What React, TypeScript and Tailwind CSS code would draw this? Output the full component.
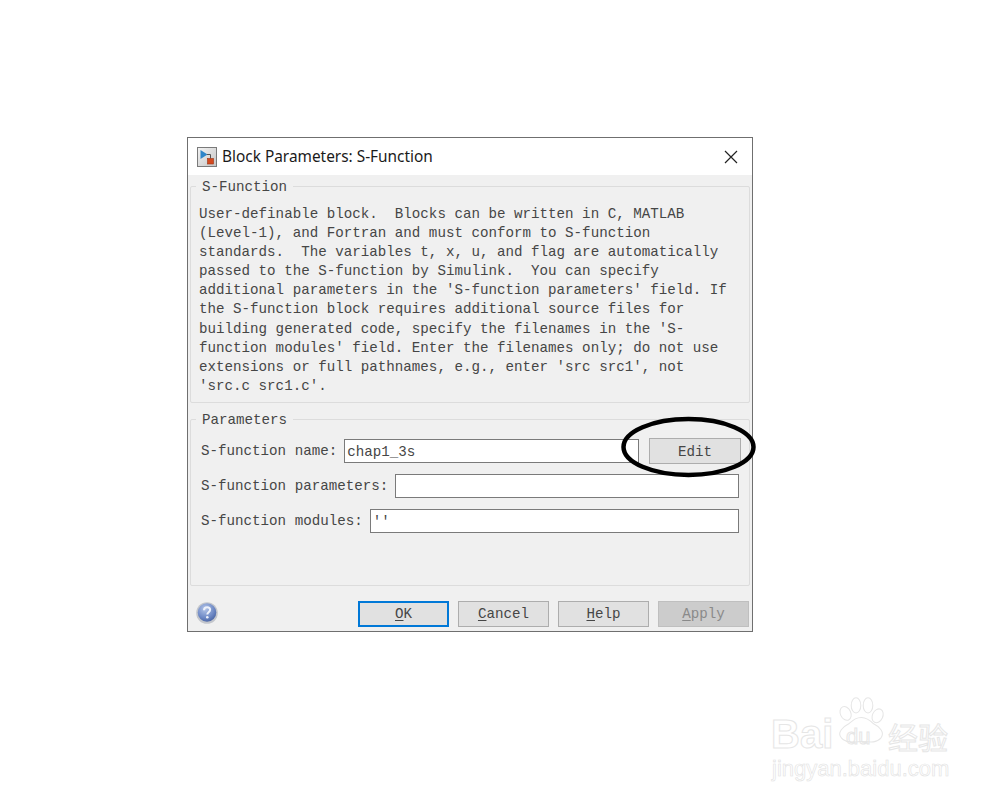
const mono = "font-['Liberation_Mono',monospace] text-[14.2px] text-[#464646]";

const lines = [
  "User-definable block.  Blocks can be written in C, MATLAB",
  "(Level-1), and Fortran and must conform to S-function",
  "standards.  The variables t, x, u, and flag are automatically",
  "passed to the S-function by Simulink.  You can specify",
  "additional parameters in the 'S-function parameters' field. If",
  "the S-function block requires additional source files for",
  "building generated code, specify the filenames in the 'S-",
  "function modules' field. Enter the filenames only; do not use",
  "extensions or full pathnames, e.g., enter 'src src1', not",
  "'src.c src1.c'.",
];

function BlockIcon() {
  return (
    <svg width="20" height="20" viewBox="0 0 20 20" className="shrink-0">
      <defs>
        <linearGradient id="ib" x1="0" y1="0" x2="1" y2="1">
          <stop offset="0" stopColor="#f4f4f4" />
          <stop offset="1" stopColor="#c4c4c4" />
        </linearGradient>
      </defs>
      <rect x="0.5" y="0.5" width="19" height="19" fill="url(#ib)" stroke="#7a7a7a" />
      <path d="M3.5 3v9l7-4.500z" fill="#2f86c9" />
      <path d="M10 7.500h3.500v4" fill="none" stroke="#555" strokeWidth="1" />
      <rect x="10.500" y="11.500" width="6" height="5.500" fill="#d4491f" stroke="#9c3413" strokeWidth="0.6" />
    </svg>
  );
}

function HelpIcon() {
  return (
    <svg width="22" height="22" viewBox="0 0 22 22" className="mt-[1px]">
      <defs>
        <radialGradient id="hb" cx="0.4" cy="0.3" r="0.8">
          <stop offset="0" stopColor="#b4c5e8" />
          <stop offset="0.6" stopColor="#6f8ac6" />
          <stop offset="1" stopColor="#3f5a9a" />
        </radialGradient>
      </defs>
      <circle cx="11" cy="11" r="10.800" fill="#c3c6cc" />
      <circle cx="11" cy="10.500" r="9.300" fill="url(#hb)" />
      <path d="M8 8.200c0-2 1.400-3 3.100-3s3 1 3 2.600c0 2.400-2.800 2.500-2.800 4.700" fill="none" stroke="#eef2fb" strokeWidth="2" />
      <circle cx="11.300" cy="15.200" r="1.300" fill="#eef2fb" />
    </svg>
  );
}

function Field({ label, value, extra }: { label: string; value?: string; extra?: boolean }) {
  return (
    <div className="flex items-center h-[24px] pl-[10px] pr-[10px]">
      <span className={`${mono} whitespace-pre mr-[7px] pt-[2px]`}>{label}</span>
      <div className={`${mono} ${extra ? "w-[295px]" : "flex-1"} h-[24px] bg-white border border-[#7a7a7a] pl-[2px] leading-[24px] whitespace-pre`}>
        {value}
      </div>
      {extra && (
        <div className={`${mono} ml-[10px] -mr-[2px] w-[92px] shrink-0 h-[26px] pt-[4px] bg-[#e1e1e1] border border-[#adadad] flex items-center justify-center`}>
          Edit
        </div>
      )}
    </div>
  );
}

function Btn({ k, rest, cls }: { k: string; rest: string; cls?: string }) {
  return (
    <div className={`${mono} w-[91px] h-[26px] pt-[2px] flex items-center justify-center ${cls ?? "bg-[#e1e1e1] border border-[#adadad]"}`}>
      <span className="underline underline-offset-2">{k}</span>
      {rest}
    </div>
  );
}

function Watermark() {
  const outline = "text-transparent [-webkit-text-stroke:1px_#e6e6e6] font-['Liberation_Sans',sans-serif]";
  return (
    <div className="absolute left-[772px] top-[694px] w-[180px] h-[86px]">
      <span className={`${outline} absolute -left-[1px] top-[20px] text-[40px] font-bold leading-[40px]`}>Bai</span>
      <svg className="absolute left-[60px] top-0" width="56" height="58" viewBox="0 0 70 66" fill="#fff" stroke="#e6e6e6" strokeWidth="1.300">
        <ellipse cx="17" cy="21" rx="6.500" ry="9" transform="rotate(-25 17 21)" />
        <ellipse cx="30" cy="11" rx="6" ry="9.500" />
        <ellipse cx="45" cy="11" rx="6" ry="9.500" />
        <ellipse cx="57" cy="24" rx="6.500" ry="9" transform="rotate(25 57 24)" />
        <path d="M12 52c-7-7 3-15 9-18 6-5 9-8 16-8s11 4 15 8c6 3 15 10 9 18-5 6-13 5-24 4-11 1-20 2-25-4z" />
      </svg>
      <span className={`${outline} absolute left-[74px] top-[31px] text-[22px] leading-[24px]`}>du</span>
      <span className="absolute left-[116px] top-[27px] text-transparent [-webkit-text-stroke:1px_#e6e6e6] font-['Noto_Sans_CJK_SC',sans-serif] text-[30px] leading-[30px]">经验</span>
      <span className="absolute left-0 top-[63px] text-transparent [-webkit-text-stroke:0.6px_#e2e2e2] font-['Liberation_Sans',sans-serif] text-[22px] leading-[24px] whitespace-pre">jingyan.baidu.com</span>
    </div>
  );
}

export default function App() {
  return (
    <div className="relative w-[1005px] h-[802px] bg-white overflow-hidden pt-[137px] pl-[187px]">
      <div className="w-[566px] h-[495px] border border-[#6f6f6f] bg-[#f0f0f0] flex flex-col">
        <div className="h-[37px] bg-white flex items-center pl-[9px] pr-[14px] shrink-0">
          <BlockIcon />
          <span className="ml-[5px] flex-1 font-['Noto_Sans',sans-serif] text-[15.4px] text-[#1a1a1a]">Block Parameters: S-Function</span>
          <svg width="14" height="14" viewBox="0 0 14 14" fill="none" stroke="#222" strokeWidth="1.200">
            <path d="M1 1l12 12M13 1L1 13" />
          </svg>
        </div>

        <fieldset className="mx-[2px] mt-[2px] min-w-0 border border-[#dcdcdc] rounded-[2px] h-[226px] shrink-0">
          <legend className={`${mono} ml-[5px] px-[6px] pt-[2px] leading-[17px] text-[#444]`}>S-Function</legend>
          <div className="mt-[9px] pl-[8px]">
            {lines.map((l) => (
              <div key={l} className={`${mono} whitespace-pre h-[19.100px] leading-[19.100px]`}>{l}</div>
            ))}
          </div>
        </fieldset>

        <fieldset className="mx-[2px] mt-[7px] min-w-0 border border-[#dcdcdc] rounded-[2px] h-[176px] shrink-0">
          <legend className={`${mono} ml-[5px] px-[6px] pt-[2px] leading-[17px] text-[#444]`}>Parameters</legend>
          <div className="flex flex-col gap-[11px] mt-[10px]">
            <Field label="S-function name:" value="chap1_3s" extra />
            <Field label="S-function parameters:" />
            <Field label="S-function modules:" value="''" />
          </div>
        </fieldset>

        <div className="flex items-start pl-[8px] pr-[3px] pt-[15px] h-[45px] shrink-0">
          <HelpIcon />
          <div className="ml-auto flex gap-[9px]">
            <Btn k="O" rest="K" cls="bg-[#e1e1e1] border-2 border-[#0078d7]" />
            <Btn k="C" rest="ancel" />
            <Btn k="H" rest="elp" />
            <Btn k="A" rest="pply" cls="bg-[#cccccc] border border-[#bfbfbf] !text-[#8a8a8a]" />
          </div>
        </div>
      </div>

      <svg className="absolute left-[620px] top-[415px] pointer-events-none" width="138" height="64" viewBox="0 0 138 64" fill="none" stroke="#000" strokeWidth="4.500">
        <ellipse cx="68.500" cy="32" rx="65" ry="28" />
      </svg>

      <Watermark />
    </div>
  );
}
